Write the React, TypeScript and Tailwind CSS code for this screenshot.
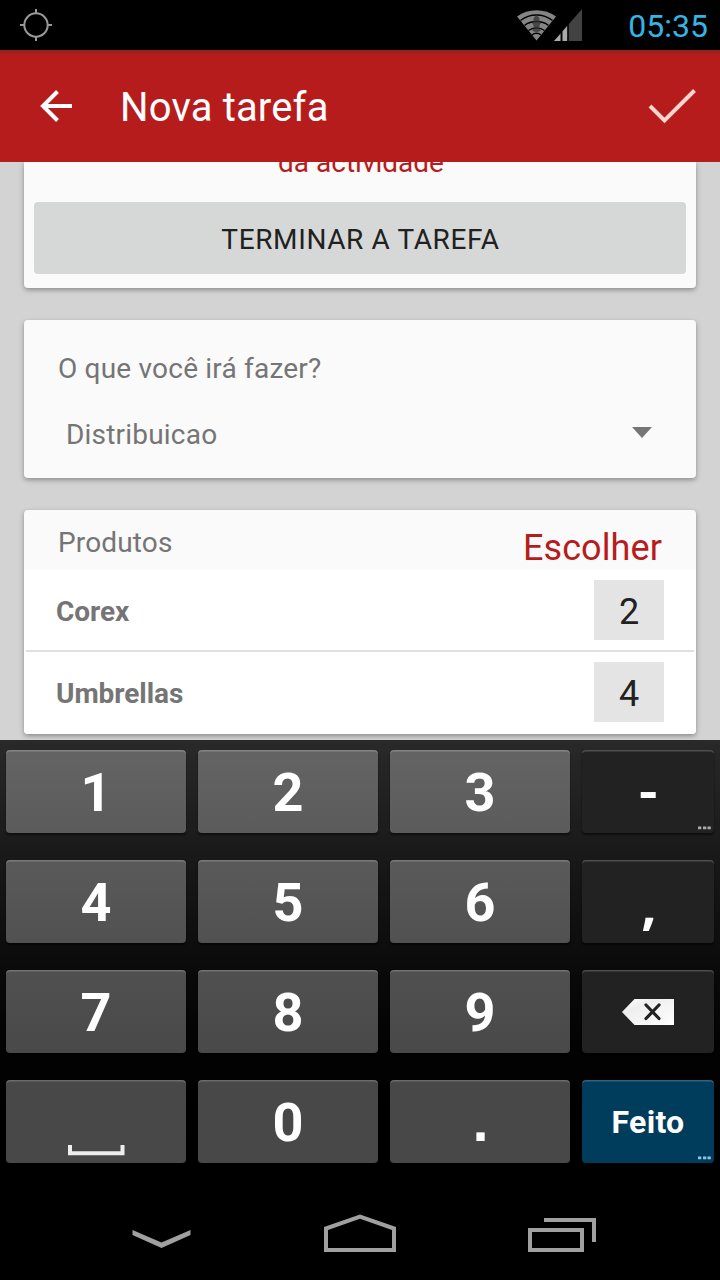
import type { ReactNode } from "react";

function GpsIcon() {
  return (
    <svg width="32" height="32" viewBox="0 0 32 32" fill="none" stroke="#999" strokeWidth="2">
      <circle cx="16" cy="16" r="11.7" />
      <path d="M16 0v5M16 27v5M0 16h5M27 16h5" />
    </svg>
  );
}

function WifiIcon() {
  return (
    <svg width="40" height="31" viewBox="0 0 40 31">
      <path d="M19.5 30.5 0 6.5C11 -2 28 -2 39 6.5Z" fill="#858585" />
      <g fill="none" stroke="#000" strokeWidth="1.5">
        <path d="M3.5 10.5C13 3.2 26 3.2 35.500 10.500" />
        <path d="M7.500 15.500C14 10.300 25 10.300 31.500 15.500" />
        <path d="M11.500 20.500C16 17 23 17 27.500 20.500" />
        <path d="M15 25C17.500 22.800 21.500 22.800 24 25" />
      </g>
      <path d="M19.500 5 22.500 8v3l1.500 2-1.500 2v3l1 3-3 1h-2l-3-1 1-3v-3L15 13l1.500-2V8Z" fill="#333" fillOpacity=".75" />
    </svg>
  );
}

function SignalIcon() {
  return (
    <svg width="28" height="32" viewBox="0 0 28 32">
      <path d="M0 32 28 0V32Z" fill="#424242" />
      <path d="M0 32 6.500 24.700V32Z" fill="#aaa" />
      <path d="M8.500 22.500 13.500 16.600V32h-5Z" fill="#aaa" />
      <path d="M7.500 21v11M14 15v17" stroke="#000" strokeWidth="1.500" />
    </svg>
  );
}

function BackspaceIcon() {
  return (
    <svg className="-mt-[3px] ml-px" width="53" height="26" viewBox="0 0 53 26">
      <defs>
        <linearGradient id="del" x1="0" y1="0" x2="1" y2="1">
          <stop offset="0" stopColor="#fff" />
          <stop offset=".3" stopColor="#eee" />
          <stop offset="1" stopColor="#fff" />
        </linearGradient>
      </defs>
      <path d="M0 13 12.500 0H52V26H12.500Z" fill="url(#del)" />
      <path d="M24 6 37 19.500M37 6 24 19.500" stroke="#222" strokeWidth="3.200" strokeLinecap="round" />
    </svg>
  );
}

function Dots({ color }: { color: string }) {
  return (
    <svg className="absolute right-[3px] bottom-[3px]" width="13" height="4" viewBox="0 0 13 4" fill={color}>
      <path d="M0 .5h3.300v2.800H0zM5 .5h3.300v2.800H5zM9.500 .5h3.300v2.800H9.500z" />
    </svg>
  );
}

const rowShades = [
  "bg-linear-to-b from-[#646464] to-[#5b5b5b]",
  "bg-linear-to-b from-[#5a5a5a] to-[#515151]",
  "bg-linear-to-b from-[#505050] to-[#494949]",
  "bg-[#484848]",
];

function Key({ tone, children }: { tone: string; children: ReactNode }) {
  return (
    <button
      className={`relative flex h-[83px] items-center justify-center rounded-[4px] pt-[3px] text-[54px] leading-none font-bold text-white shadow-[inset_0_2px_0_-0.5px_rgba(255,255,255,0.2),0_2px_2px_rgba(0,0,0,0.5)] ${tone}`}
    >
      {children}
    </button>
  );
}

function Keyboard() {
  const rows = [["1", "2", "3"], ["4", "5", "6"], ["7", "8", "9"]];
  const side = [
    <><span className="pl-px">-</span><Dots color="#aaa" /></>,
    <span className="pl-0.5 font-['Open_Sans',sans-serif] text-[54px]">,</span>,
    <BackspaceIcon />,
  ];
  return (
    <section className="h-[450px] bg-linear-to-b from-[#292929] via-[#060606] via-60% to-black px-1.5 pt-2.5">
      <div className="grid grid-cols-[180px_180px_180px_132px] gap-x-3 gap-y-[27px]">
        {rows.map((row, i) => [
          ...row.map((n) => <Key key={n} tone={rowShades[i]}>{n}</Key>),
          <Key key={`side${i}`} tone="bg-[#222]">{side[i]}</Key>,
        ])}
        <Key tone={rowShades[3]}>
          <svg className="mt-[54px]" width="57" height="11" viewBox="0 0 57 11">
            <path d="M2 0V8.200H54.500V0" fill="none" stroke="#eee" strokeWidth="4" />
          </svg>
        </Key>
        <Key tone={rowShades[3]}>0</Key>
        <Key tone={rowShades[3]}>
          <span className="pb-1 pl-px font-['Liberation_Sans',sans-serif] text-[58px] leading-[54px]">.</span>
        </Key>
        <Key tone="bg-[#003c5c]">
          <span className="-mt-0.5 text-[32px] leading-none tracking-[0.3px]">Feito</span>
          <Dots color="#8fc4e0" />
        </Key>
      </div>
    </section>
  );
}

const card = "mx-6 rounded-[4px] bg-[#fafafa] shadow-[0_2px_5px_rgba(0,0,0,0.34)]";

function Product({ name, amount }: { name: string; amount: string }) {
  return (
    <div className="flex h-20 items-center justify-between pr-8 pl-8">
      <span className="pt-1 text-[28px] leading-8 font-bold tracking-[-0.05px] text-[#757575]">{name}</span>
      <span className="flex h-[60px] w-[70px] items-center justify-center bg-[#e4e4e4] pt-[3px] text-[36px] leading-none text-[#212121]">
        {amount}
      </span>
    </div>
  );
}

export default function App() {
  return (
    <div className="flex h-[1280px] w-[720px] flex-col overflow-hidden bg-black font-['Roboto',sans-serif]">
      <div className="flex h-[50px] shrink-0 items-center pr-3 pl-5">
        <GpsIcon />
        <div className="ml-auto flex items-end">
          <WifiIcon />
          <div className="-ml-[3px]"><SignalIcon /></div>
        </div>
        <span className="ml-[46px] pt-px text-[32px] leading-none text-[#33b5e5]">05:35</span>
      </div>

      <header className="flex h-28 shrink-0 items-center bg-linear-to-b from-[#931f1f] to-[#b71c1c] to-5% pr-6 pl-10">
        <svg width="32" height="32" viewBox="0 0 32 32" fill="none" stroke="#fff" strokeWidth="4">
          <path d="M32 16H3M17.500 1.500 3 16 17.500 30.500" />
        </svg>
        <h1 className="ml-12 pt-[3px] text-[40px] leading-none tracking-[0.17px] text-white">Nova tarefa</h1>
        <svg className="ml-auto" width="48" height="36" viewBox="0 0 48 36" fill="none" stroke="#fcd5d1" strokeWidth="4">
          <path d="M2 18 16.500 32.500 46.500 2.500" />
        </svg>
      </header>

      <main className="h-[578px] shrink-0 overflow-hidden bg-[#d3d3d3]">
        <section className={`${card} h-[126px] rounded-t-none px-2.5`}>
          <div className="flex h-10 flex-col items-center">
            <p className="-mt-[15px] pl-0.5 text-[28px] leading-8 text-[#b71c1c]">da actividade</p>
          </div>
          <button className="flex h-[72px] w-full items-center justify-center rounded-[4px] bg-[#d6d8d7] pt-[3px] pl-px text-[28px] tracking-[0.62px] text-[#212121]">
            TERMINAR A TAREFA
          </button>
        </section>

        <section className={`${card} mt-8 h-[158px] pt-[33px] pl-[34px] text-[28px] leading-8 tracking-[0.2px] text-[#757575]`}>
          <p>O que você irá fazer?</p>
          <div className="mt-[34px] flex items-center justify-between pr-[44px] pl-2">
            <span>Distribuicao</span>
            <svg className="-mt-1.5" width="20" height="11" viewBox="0 0 20 11">
              <path d="M0 0H20L10 11Z" fill="#757575" />
            </svg>
          </div>
        </section>

        <section className={`${card} mt-8 h-56 overflow-hidden`}>
          <div className="flex h-[60px] justify-between pr-[34px] pl-[34px]">
            <span className="pt-[17px] text-[28px] leading-8 tracking-[0.15px] text-[#757575]">Produtos</span>
            <span className="pt-[18px] text-[36px] leading-10 tracking-[0.1px] text-[#b71c1c]">Escolher</span>
          </div>
          <div className="h-[164px] bg-white">
            <Product name="Corex" amount="2" />
            <div className="mx-0.5 h-0.5 bg-[#e0e0e0]" />
            <Product name="Umbrellas" amount="4" />
          </div>
        </section>
      </main>

      <Keyboard />

      <nav className="flex h-[90px] items-center">
        <svg className="mt-2 ml-[132px]" width="59" height="19" viewBox="0 0 59 19">
          <path d="M.500 0 29.500 12.500 58.500 0V5L29.500 18 .500 5Z" fill="#a0a0a0" />
        </svg>
        <svg className="ml-[133px] -mt-1" width="72" height="38" viewBox="0 0 72 38" fill="none" stroke="#a0a0a0" strokeWidth="4">
          <path d="M2 36V14.500L36 2.500 70 14.500V36Z" />
        </svg>
        <svg className="ml-[132px]" width="68" height="34" viewBox="0 0 68 34" fill="none" stroke="#a0a0a0" strokeWidth="4">
          <path d="M16 2H66V24M2 12H54V32H2Z" />
        </svg>
      </nav>
    </div>
  );
}
